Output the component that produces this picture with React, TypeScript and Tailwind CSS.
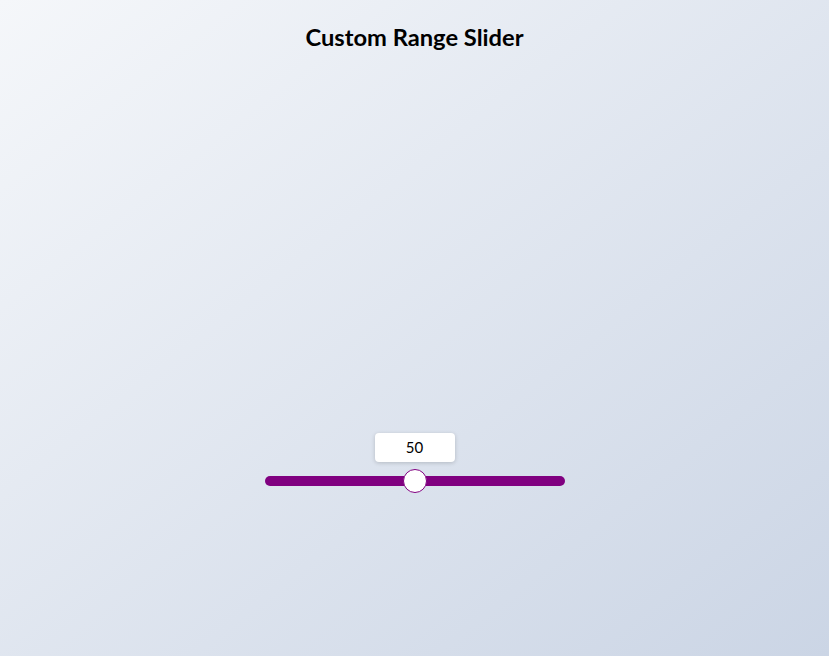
import { useState } from "react";

export default function App() {
  const [value] = useState(50);
  return (
    <div className="flex h-[656px] w-full flex-col items-center bg-gradient-to-br from-[#f5f7fa] to-[#cbd5e5] font-['Lato',sans-serif] text-black">
      <h1 className="mt-[23px] text-[23.7px] font-bold leading-[29px]">Custom Range Slider</h1>
      <div className="mt-[381px] flex w-[300px] flex-col items-center">
        <div className="flex h-[29px] w-[80px] items-center justify-center rounded-[4px] bg-white text-[15px] shadow-[0_1px_4px_rgba(0,0,0,0.18)]">
          {value}
        </div>
        <div className="relative mt-[14px] h-[10px] w-full rounded-full bg-[#800080]">
          <div
            className="absolute top-1/2 h-[24px] w-[24px] -translate-x-1/2 -translate-y-1/2 rounded-full border border-[#800080] bg-white"
            style={{ left: `${value}%` }}
          />
        </div>
      </div>
    </div>
  );
}
